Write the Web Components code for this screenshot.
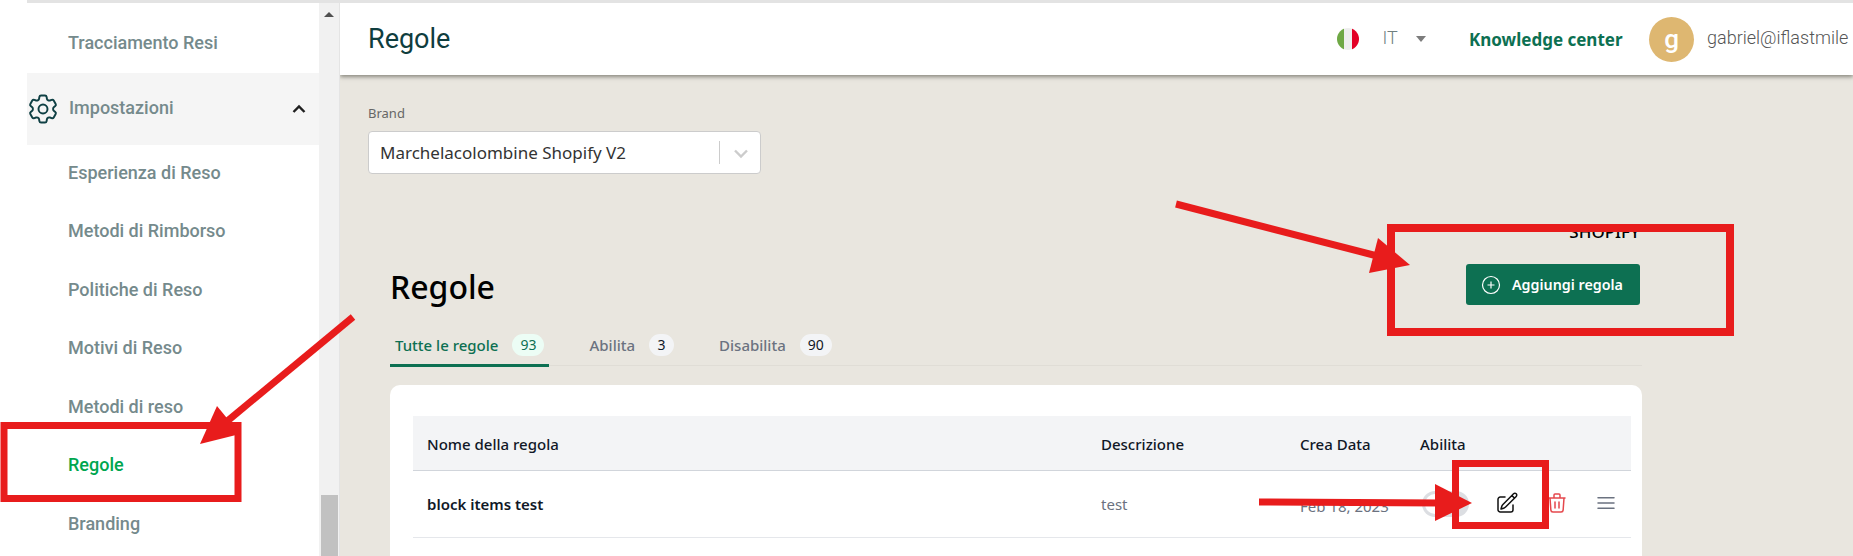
<!DOCTYPE html>
<html lang="it">
<head>
<meta charset="utf-8">
<title>Regole</title>
<style>
  html, body { margin: 0; height: 100%; overflow: hidden; background: #fff; }
  body { font-family: "Noto Sans", sans-serif; }
</style>
</head>
<body>
<app-shell>
  <side-bar slot="side">
    <nav-item>Tracciamento Resi</nav-item>
    <nav-group>Impostazioni</nav-group>
    <nav-item>Esperienza di Reso</nav-item>
    <nav-item>Metodi di Rimborso</nav-item>
    <nav-item>Politiche di Reso</nav-item>
    <nav-item>Motivi di Reso</nav-item>
    <nav-item>Metodi di reso</nav-item>
    <nav-item active>Regole</nav-item>
    <nav-item>Branding</nav-item>
  </side-bar>
  <top-bar slot="top"></top-bar>
  <brand-select slot="main"></brand-select>
  <rules-panel slot="main"></rules-panel>
</app-shell>
<red-marks></red-marks>

<script>
class AppShell extends HTMLElement {
  constructor() {
    super()
    this.attachShadow({ mode: 'open' }).innerHTML = /*html*/`
      <style>
        :host { display: block; height: 556px; overflow: hidden; box-sizing: border-box; padding-left: 27px; }
        .frame { height: 100%; display: grid; grid-template-columns: 292px 21px 1fr; border-top: 3px solid #e3e3e3; box-sizing: border-box; }
        .track { background: #f1f1f1; border-right: 1px solid #e4e4e4; display: flex; flex-direction: column; justify-content: space-between; align-items: center; box-sizing: border-box; }
        .up { width: 0; height: 0; margin-top: 9px; border: 5px solid transparent; border-top: 0; border-bottom: 5px solid #505050; }
        .thumb { width: 17px; height: 61px; background: #c1c1c1; }
        .main { background: #e9e6df; min-width: 0; display: flex; flex-direction: column; overflow: hidden; }
      </style>
      <div class="frame">
        <slot name="side"></slot>
        <div class="track"><div class="up"></div><div class="thumb"></div></div>
        <div class="main">
          <slot name="top"></slot>
          <slot name="main"></slot>
        </div>
      </div>
    `
  }
}

class SideBar extends HTMLElement {
  constructor() {
    super()
    this.attachShadow({ mode: 'open' }).innerHTML = /*html*/`
      <style>
        :host { display: flex; flex-direction: column; background: #fff; padding-top: 11.5px; font-family: Roboto, sans-serif; }
      </style>
      <slot></slot>
    `
  }
}

class NavItem extends HTMLElement {
  constructor() {
    super()
    this.attachShadow({ mode: 'open' }).innerHTML = /*html*/`
      <style>
        :host { display: flex; align-items: center; flex: none; height: 56px; margin-bottom: 2.5px; padding-left: 41px; font-size: 18px; font-weight: 500; color: #758a8c; }
        :host([active]) { color: #00a64f; }
      </style>
      <slot></slot>
    `
  }
}

class NavGroup extends HTMLElement {
  constructor() {
    super()
    this.attachShadow({ mode: 'open' }).innerHTML = /*html*/`
      <style>
        :host { display: flex; align-items: center; flex: none; height: 72px; margin-bottom: -1px; box-sizing: border-box; padding: 0 10px 3px 0; background: #f5f5f5; font-size: 18px; font-weight: 500; color: #758a8c; }
        .gear { width: 36px; height: 36px; margin-right: 8px; margin-left: -2px; margin-top: 3px; flex: none; }
        .label { flex: 1; }
        .up { width: 20px; height: 20px; margin-top: 3px; }
      </style>
      <svg class="gear" viewBox="0 0 24 24" fill="none" stroke="#0f4044" stroke-width="1.3" stroke-linecap="round" stroke-linejoin="round">
        <path d="M9.594 3.94c.09-.542.56-.94 1.11-.94h2.593c.55 0 1.02.398 1.11.94l.213 1.281c.063.374.313.686.645.87.074.04.147.083.22.127.325.196.72.257 1.075.124l1.217-.456a1.125 1.125 0 0 1 1.37.49l1.296 2.247a1.125 1.125 0 0 1-.26 1.431l-1.003.827c-.293.241-.438.613-.43.992a7.723 7.723 0 0 1 0 .255c-.008.378.137.75.43.991l1.004.827c.424.35.534.955.26 1.43l-1.298 2.247a1.125 1.125 0 0 1-1.369.491l-1.217-.456c-.355-.133-.75-.072-1.076.124a6.47 6.47 0 0 1-.22.128c-.331.183-.581.495-.644.869l-.213 1.281c-.09.543-.56.94-1.11.94h-2.594c-.55 0-1.019-.398-1.11-.94l-.213-1.281c-.062-.374-.312-.686-.644-.87a6.52 6.52 0 0 1-.22-.127c-.325-.196-.72-.257-1.076-.124l-1.217.456a1.125 1.125 0 0 1-1.369-.49l-1.297-2.247a1.125 1.125 0 0 1 .26-1.431l1.004-.827c.292-.24.437-.613.43-.991a6.932 6.932 0 0 1 0-.255c.007-.38-.138-.751-.43-.992l-1.004-.827a1.125 1.125 0 0 1-.26-1.43l1.297-2.247a1.125 1.125 0 0 1 1.37-.491l1.216.456c.356.133.751.072 1.076-.124.072-.044.146-.086.22-.128.332-.183.582-.495.644-.869l.214-1.28Z"/>
        <circle cx="12" cy="12" r="3"/>
      </svg>
      <span class="label"><slot></slot></span>
      <svg class="up" viewBox="0 0 20 20" fill="none" stroke="#1f1f1f" stroke-width="2.4"><path d="M4.5 13 10 7.5l5.500 5.500"/></svg>
    `
  }
}

class TopBar extends HTMLElement {
  constructor() {
    super()
    this.attachShadow({ mode: 'open' }).innerHTML = /*html*/`
      <style>
        :host { display: flex; align-items: center; flex: none; height: 72px; box-sizing: border-box; padding-left: 28px; background: #fff; box-shadow: 0 2px 4px rgba(60,60,50,.55); position: relative; white-space: nowrap; font-family: Roboto, sans-serif; }
        h1 { margin: 0 0 1px; font-size: 27px; font-weight: 400; color: #0f3d3e; flex: 1; }
        .flag { width: 22px; height: 22px; border-radius: 50%; background: linear-gradient(90deg, #6fa845 0 33%, #eeeeee 33% 67%, #e30026 67%); margin-right: 24px; }
        .lang { font-size: 18px; font-weight: 300; color: #6f7f7f; width: 15px; margin: -4px 18px 0 0; }
        .caret { width: 0; height: 0; border: 5.500px solid transparent; border-bottom: 0; border-top: 6px solid #7c7c7c; margin-right: 43.500px; }
        .help { font-family: "Noto Sans", sans-serif; font-size: 17px; font-weight: 700; color: #0d7052; width: 153px; margin-right: 27px; }
        .avatar { width: 45px; height: 45px; border-radius: 50%; background: #deb771; color: #fff; font-size: 26px; font-weight: 500; display: flex; align-items: center; justify-content: center; margin-right: 13px; }
        .mail { font-size: 18px; font-weight: 300; color: #555; width: 146px; margin-top: -3px; }
      </style>
      <h1>Regole</h1>
      <span class="flag"></span>
      <span class="lang">IT</span>
      <span class="caret"></span>
      <span class="help">Knowledge center</span>
      <span class="avatar">g</span>
      <span class="mail">gabriel@iflastmile</span>
    `
  }
}

class BrandSelect extends HTMLElement {
  constructor() {
    super()
    this.attachShadow({ mode: 'open' }).innerHTML = /*html*/`
      <style>
        :host { display: block; flex: none; padding: 29px 0 0 28px; font-family: "Noto Sans", sans-serif; }
        label { display: block; font-size: 13px; line-height: 18px; color: #666; margin-bottom: 9px; }
        .box { width: 393px; height: 43px; box-sizing: border-box; display: flex; align-items: center; background: #fff; border: 1px solid #ccc; border-radius: 4px; padding-left: 11px; font-size: 17px; color: #333; }
        .value { flex: 1; }
        .sep { width: 1px; height: 23px; background: #ccc; }
        svg { width: 20px; height: 20px; margin: 0 9px 0 11px; }
      </style>
      <label>Brand</label>
      <div class="box">
        <span class="value">Marchelacolombine Shopify V2</span>
        <span class="sep"></span>
        <svg viewBox="0 0 20 20" fill="none" stroke="#ccc" stroke-width="2.4"><path d="M4 7.500 10 13.500l6-6"/></svg>
      </div>
    `
  }
}

class CountTab extends HTMLElement {
  constructor() {
    super()
    this.attachShadow({ mode: 'open' }).innerHTML = /*html*/`
      <style>
        :host { display: flex; align-items: center; gap: 14px; height: 42px; box-sizing: border-box; padding: 0 5px; font-size: 15px; font-weight: 500; color: #6b7280; border-bottom: 3px solid transparent; margin-bottom: -2px; }
        :host([active]) { color: #0d7052; border-bottom-color: #0d7052; }
        .pill { min-width: 25px; height: 22px; box-sizing: border-box; padding: 0 8px; display: flex; align-items: center; justify-content: center; border-radius: 11px; background: #f3f4f6; color: #111827; font-size: 14px; font-weight: 400; }
        :host([active]) .pill { background: #ecfdf5; color: #0d7052; }
      </style>
      <slot></slot>
      <span class="pill"></span>
    `
  }
  connectedCallback() {
    this.shadowRoot.querySelector('.pill').textContent = this.getAttribute('count')
  }
}

class RulesPanel extends HTMLElement {
  constructor() {
    super()
    this.attachShadow({ mode: 'open' }).innerHTML = /*html*/`
      <style>
        :host { display: block; flex: none; margin-top: 52px; padding-left: 50px; width: 1252px; font-family: "Noto Sans", sans-serif; }
        .head { display: flex; justify-content: space-between; align-items: flex-end; height: 79px; }
        h2 { margin: 0 0 -2px; font-size: 32px; line-height: 40px; font-weight: 500; color: #000; }
        .right { display: flex; flex-direction: column; align-items: flex-end; gap: 24px; margin-right: 2px; }
        .shop { font-size: 17px; line-height: 16px; font-weight: 500; color: #000; }
        button { display: flex; align-items: center; gap: 11px; width: 174px; height: 41px; padding: 0 0 0 15px; border: 0; border-radius: 3px; background: #0d7052; color: #fff; font: 600 14.3px "Noto Sans", sans-serif; }
        button svg { width: 20px; height: 20px; }
        .tabs { display: flex; gap: 35px; border-bottom: 1px solid #e0ddd6; margin-top: 20px; }
        .card { margin-top: 19px; background: #fff; border-radius: 10px 10px 0 0; padding: 31px 11px 0 23px; height: 240px; box-sizing: border-box; }
      </style>
      <div class="head">
        <h2>Regole</h2>
        <div class="right">
          <span class="shop">SHOPIFY</span>
          <button>
            <svg viewBox="0 0 20 20" fill="none" stroke="#fff" stroke-width="1.2"><circle cx="10" cy="10" r="8.500"/><path d="M10 6.500v7M6.500 10h7"/></svg>
            Aggiungi regola
          </button>
        </div>
      </div>
      <div class="tabs">
        <count-tab active count="93">Tutte le regole</count-tab>
        <count-tab count="3">Abilita</count-tab>
        <count-tab count="90">Disabilita</count-tab>
      </div>
      <div class="card"><rules-table></rules-table></div>
    `
  }
}

class RulesTable extends HTMLElement {
  constructor() {
    super()
    this.rules = [{ name: 'block items test', description: 'test', date: 'Feb 18, 2023' }]
    this.attachShadow({ mode: 'open' }).innerHTML = /*html*/`
      <style>
        :host { display: block; font-size: 15px; }
        .row { display: grid; grid-template-columns: 674px 199px 120px 1fr; align-items: center; box-sizing: border-box; }
        .row > * { padding-left: 14px; }
        .titles { height: 55px; background: #f3f4f6; border-bottom: 1px solid #d1d5db; font-weight: 500; color: #111827; padding-top: 1px; }
        .rule { height: 67px; border-bottom: 1px solid #e5e7eb; color: #6b7280; }
        .name { font-weight: 600; color: #111827; }
        .date { padding-top: 4px; }
        .actions { display: flex; align-items: center; }
        .toggle { width: 47px; height: 26px; margin-left: 2px; border-radius: 13px; background: #dcdee2; position: relative; flex: none; }
        .toggle::after { content: ""; position: absolute; left: 3px; top: 3px; width: 20px; height: 20px; border-radius: 50%; background: #fff; }
        svg { width: 24px; height: 24px; flex: none; }
        .edit { margin-left: 26px; margin-top: -2px; }
        .trash { margin-left: 26px; margin-top: -2px; }
        .menu { margin-left: 25px; margin-top: -2px; }
      </style>
      <div class="row titles">
        <span>Nome della regola</span><span>Descrizione</span><span>Crea Data</span><span>Abilita</span>
      </div>
    `
  }
  connectedCallback() {
    this.rules.forEach(rule => {
      const row = document.createElement('div')
      row.className = 'row rule'
      row.innerHTML = /*html*/`
        <span class="name">${rule.name}</span>
        <span>${rule.description}</span>
        <span class="date">${rule.date}</span>
        <span class="actions">
          <span class="toggle"></span>
          <svg class="edit" viewBox="0 0 24 24" fill="none" stroke="#111" stroke-width="1.5" stroke-linecap="round" stroke-linejoin="round"><path d="m16.862 4.487 1.687-1.688a1.875 1.875 0 1 1 2.652 2.652L10.582 16.07a4.500 4.500 0 0 1-1.897 1.130L6 18l.8-2.685a4.500 4.500 0 0 1 1.130-1.897l8.932-8.931Zm0 0L19.500 7.125M18 14v4.750A2.250 2.250 0 0 1 15.750 21H5.250A2.250 2.250 0 0 1 3 18.750V8.250A2.250 2.250 0 0 1 5.250 6H10"/></svg>
          <svg class="trash" viewBox="0 0 24 24" fill="none" stroke="#e5484d" stroke-width="1.5" stroke-linecap="round" stroke-linejoin="round"><path d="M19 7l-.867 12.142A2 2 0 0 1 16.138 21H7.862a2 2 0 0 1-1.995-1.858L5 7m5 4v6m4-6v6m1-10V4a1 1 0 0 0-1-1h-4a1 1 0 0 0-1 1v3M4 7h16"/></svg>
          <svg class="menu" viewBox="0 0 24 24" fill="none" stroke="#6b7280" stroke-width="1.5" stroke-linecap="round"><path d="M4 6.700h16M4 12h16M4 17.300h16"/></svg>
        </span>
      `
      this.shadowRoot.appendChild(row)
    })
  }
}

// the red annotations drawn on top of the screenshot
class RedMarks extends HTMLElement {
  constructor() {
    super()
    this.attachShadow({ mode: 'open' }).innerHTML = /*html*/`
      <style>
        :host { position: absolute; left: 0; top: 0; width: 1853px; height: 556px; pointer-events: none; }
        svg { display: block; }
        rect { fill: none; stroke: #e81c1c; }
        line { stroke: #e81c1c; stroke-width: 7; }
        polygon { fill: #e81c1c; }
      </style>
      <svg width="1853" height="556" viewBox="0 0 1853 556">
        <rect x="4" y="425.500" width="234" height="73" stroke-width="7"/>
        <rect x="1391" y="228" width="339" height="104" stroke-width="8"/>
        <rect x="1455.500" y="463.500" width="90" height="62" stroke-width="7"/>
        <line x1="353" y1="317" x2="225" y2="423"/>
        <polygon points="200,444 217,406 240,434"/>
        <line x1="1176" y1="204" x2="1385" y2="258"/>
        <polygon points="1410,265 1378,238 1369,273"/>
        <line x1="1259" y1="502" x2="1440" y2="503"/>
        <polygon points="1472,503 1435,484 1435,521"/>
      </svg>
    `
  }
}

customElements.define('app-shell', AppShell)
customElements.define('side-bar', SideBar)
customElements.define('nav-item', NavItem)
customElements.define('nav-group', NavGroup)
customElements.define('top-bar', TopBar)
customElements.define('brand-select', BrandSelect)
customElements.define('count-tab', CountTab)
customElements.define('rules-panel', RulesPanel)
customElements.define('rules-table', RulesTable)
customElements.define('red-marks', RedMarks)
</script>
</body>
</html>
